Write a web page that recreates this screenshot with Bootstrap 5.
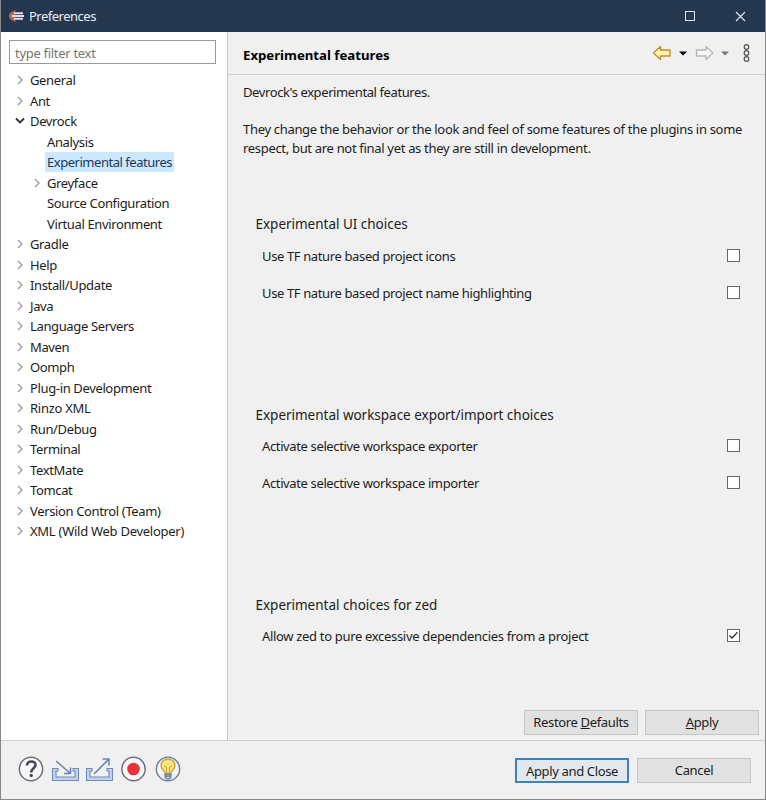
<!DOCTYPE html>
<html lang="en">
<head>
<meta charset="utf-8">
<meta name="viewport" content="width=device-width, initial-scale=1">
<title>Preferences</title>
<link href="https://cdn.jsdelivr.net/npm/bootstrap@5.3.0/dist/css/bootstrap.min.css" rel="stylesheet">
<style>
body{font-family:"Noto Sans","Open Sans",sans-serif;font-size:13px;line-height:19px;color:#1c1c1c;background:#f0f0f0;letter-spacing:-.3px}
.window{width:766px;height:800px;border:1px solid #85878a;border-top:0;background:#f0f0f0;overflow:hidden}
.titlebar{height:32px;margin:0 -1px;padding-left:9px;background:#25364f;color:#e9edf3;flex:none;letter-spacing:-.5px}
.titlebar .caption{width:46px}
.side{width:227px;background:#fff;border-right:1px solid #c9c9c9;padding:8px 0 0 8px}
.filter{width:207px;height:24px;border:1px solid #9a9a9a;border-radius:0;padding:1px 5px 0;font-size:13px;color:#666;line-height:20px;letter-spacing:-.3px}
.filter::placeholder{color:#757575}
.tree{margin-top:5.8px}
.tree li{height:20.52px;display:flex;align-items:center;padding-left:6px}
.tree li.sub{padding-left:23px}
.tree li .lbl{letter-spacing:-.36px}
.tree li .wide{letter-spacing:-.27px}
.tree svg{width:10px;height:10px;margin-right:3px;flex:none}
.tree .blank{width:13px;flex:none}
.tree .lbl{padding:0 2px;line-height:20px;white-space:nowrap}
.tree li.sub .sel{background:#cce8ff;color:#17395c;letter-spacing:-.47px}
.pagehead{height:43px;border-bottom:1px solid #cfcfcf;padding:2px 15px 0 15px}
.pagehead h1{font-size:13.2px;font-weight:700;color:#000;margin:3px 0 0;letter-spacing:0}
.content{padding:8px 15px 0;white-space:nowrap}
.content>p:first-child{letter-spacing:-.4px}
.intro{margin-top:18px;letter-spacing:-.315px}
.groups{margin-top:56px}
.group{height:190.5px;padding:0 10.5px 0 12.5px}
.group h2{font-size:13.5px;font-weight:400;line-height:20px;margin:0 0 12.5px;letter-spacing:-.02px}
.opt{height:37px;padding-left:6.5px;align-items:flex-start;letter-spacing:-.37px}
.cb{appearance:none;width:13px;height:13px;border:1px solid #666;background:#fff;margin:2px 0 0;display:block}
.zed .opt{letter-spacing:-.32px;margin-top:-1px}
.cb:checked{background:#fff url("data:image/svg+xml,%3Csvg xmlns='http://www.w3.org/2000/svg' viewBox='0 0 11 11'%3E%3Cpath d='M1.5 5.5L4 8L9.5 2.2' fill='none' stroke='%23333' stroke-width='1.3'/%3E%3C/svg%3E")}
.pagebtns{gap:7px;padding:0 6px 5px 0}
.winbtn{width:114px;height:25px;border-radius:0;border:1px solid #c6c6c6;background:#e1e1e1;color:#1c1c1c;font-size:13px;line-height:21px;padding:1px 0;white-space:nowrap;letter-spacing:-.35px}
.winbtn.primary{border:2px solid #3d82b8;line-height:20px;padding:0;background:#e3e8ee}
.footer{height:59px;border-top:1px solid #cfcfcf;padding:0 14px 0 17px;flex:none}
.footer .winbtn{margin-top:1px}
</style>
<script src="https://cdn.jsdelivr.net/npm/bootstrap@5.3.0/dist/js/bootstrap.bundle.min.js"></script>
</head>
<body>
<svg class="d-none">
<symbol id="chev" viewBox="0 0 10 10"><path d="M3 1l4 4-4 4" fill="none" stroke="#999" stroke-width="1.3"/></symbol>
<symbol id="open" viewBox="0 0 10 10"><path d="M1 2.500l4 4 4-4" fill="none" stroke="#333" stroke-width="1.8"/></symbol>
</svg>
<div class="window d-flex flex-column">
<header class="titlebar d-flex align-items-center">
<svg width="16" height="14" viewBox="0 0 16 14"><path d="M7 1C3 2 0 4 0 7s3 5 7 6C5 10 5 4 7 1z" fill="#b06a4c"/><path d="M5 4.200h9M3 7h12M5 9.800h9" stroke="#e0dcec" stroke-width="2"/></svg>
<span class="ms-1">Preferences</span>
<div class="ms-auto d-flex me-1">
<span class="caption"></span>
<svg width="51" height="32"><rect x="20.500" y="11.500" width="9" height="9" fill="none" stroke="#dfe5ed"/></svg>
<svg width="46" height="32"><path d="M20 12l9 9M29 12l-9 9" stroke="#dfe5ed" stroke-width="1.200"/></svg>
</div>
</header>
<main class="d-flex flex-grow-1">
<aside class="side flex-shrink-0">
<input class="filter d-block" placeholder="type filter text" aria-label="Filter">
<ul class="tree list-unstyled mb-0">
<li><svg><use href="#chev"/></svg><span class="lbl">General</span></li>
<li><svg><use href="#chev"/></svg><span class="lbl">Ant</span></li>
<li><svg><use href="#open"/></svg><span class="lbl">Devrock</span></li>
<li class="sub"><i class="blank"></i><span class="lbl">Analysis</span></li>
<li class="sub"><i class="blank"></i><span class="lbl sel">Experimental features</span></li>
<li class="sub"><svg><use href="#chev"/></svg><span class="lbl">Greyface</span></li>
<li class="sub"><i class="blank"></i><span class="lbl">Source Configuration</span></li>
<li class="sub"><i class="blank"></i><span class="lbl">Virtual Environment</span></li>
<li><svg><use href="#chev"/></svg><span class="lbl">Gradle</span></li>
<li><svg><use href="#chev"/></svg><span class="lbl">Help</span></li>
<li><svg><use href="#chev"/></svg><span class="lbl">Install/Update</span></li>
<li><svg><use href="#chev"/></svg><span class="lbl">Java</span></li>
<li><svg><use href="#chev"/></svg><span class="lbl">Language Servers</span></li>
<li><svg><use href="#chev"/></svg><span class="lbl">Maven</span></li>
<li><svg><use href="#chev"/></svg><span class="lbl">Oomph</span></li>
<li><svg><use href="#chev"/></svg><span class="lbl">Plug-in Development</span></li>
<li><svg><use href="#chev"/></svg><span class="lbl wide">Rinzo XML</span></li>
<li><svg><use href="#chev"/></svg><span class="lbl">Run/Debug</span></li>
<li><svg><use href="#chev"/></svg><span class="lbl">Terminal</span></li>
<li><svg><use href="#chev"/></svg><span class="lbl">TextMate</span></li>
<li><svg><use href="#chev"/></svg><span class="lbl">Tomcat</span></li>
<li><svg><use href="#chev"/></svg><span class="lbl">Version Control (Team)</span></li>
<li><svg><use href="#chev"/></svg><span class="lbl wide">XML (Wild Web Developer)</span></li>
</ul>
</aside>
<section class="flex-grow-1 d-flex flex-column">
<div class="pagehead d-flex align-items-center">
<h1>Experimental features</h1>
<svg class="ms-auto" width="100" height="24" viewBox="0 0 100 24">
<path d="M3.500 11l7-6.500v3.500h9.500v6h-9.500v3.500z" fill="#fff3b0" stroke="#c28d2c" stroke-width="1.400" stroke-linejoin="round"/>
<path d="M29 9.500h8l-4 4z" fill="#000"/>
<path d="M63 11l-7-6.500v3.500h-9.500v6h9.500v3.500z" fill="#f6f6f6" stroke="#b5b5b5" stroke-width="1.300" stroke-linejoin="round"/>
<path d="M71 9.500h8l-4 4z" fill="#777"/>
<g fill="none" stroke="#555" stroke-width="1.200"><circle cx="96.500" cy="5" r="2.300"/><circle cx="96.500" cy="11" r="2.300"/><circle cx="96.500" cy="17" r="2.300"/></g>
</svg>
</div>
<div class="content flex-grow-1">
<p class="mb-0">Devrock's experimental features.</p>
<p class="mb-0 intro">They change the behavior or the look and feel of some features of the plugins in some<br>respect, but are not final yet as they are still in development.</p>
<div class="groups">
<div class="group"><h2>Experimental UI choices</h2>
<label class="opt d-flex justify-content-between">Use TF nature based project icons<input type="checkbox" class="cb"></label>
<label class="opt d-flex justify-content-between">Use TF nature based project name highlighting<input type="checkbox" class="cb"></label></div>
<div class="group"><h2>Experimental workspace export/import choices</h2>
<label class="opt d-flex justify-content-between">Activate selective workspace exporter<input type="checkbox" class="cb"></label>
<label class="opt d-flex justify-content-between">Activate selective workspace importer<input type="checkbox" class="cb"></label></div>
<div class="group zed h-auto"><h2>Experimental choices for zed</h2>
<label class="opt d-flex justify-content-between">Allow zed to pure excessive dependencies from a project<input type="checkbox" class="cb" checked></label></div>
</div>
</div>
<div class="d-flex justify-content-end pagebtns">
<button class="winbtn">Restore <u>D</u>efaults</button>
<button class="winbtn"><u>A</u>pply</button>
</div>
</section>
</main>
<footer class="footer d-flex align-items-center">
<svg width="170" height="32" viewBox="0 0 170 32">
<g fill="#f8f8fb" stroke="#6b7080" stroke-width="1.500"><circle cx="13" cy="15" r="11.700"/><circle cx="115.500" cy="15" r="11.700"/><circle cx="150" cy="15" r="11.700" fill="#eff6fb" stroke="#71839a"/></g>
<path d="M9 11.500c0-5.300 8.500-5.300 8.500-.5 0 3.500-4.300 3.200-4.300 7.500" fill="none" stroke="#484b55" stroke-width="2.600"/><circle cx="13.200" cy="21.500" r="1.700" fill="#484b55"/>
<g fill="#c4d2ea" stroke="#6f8bb8" stroke-width="1.100"><path d="M34.500 14.500h5.500v2.500h-2v6h19v-6h-2v-2.500h5.500v12h-26z"/><path d="M68.500 14.500h5.500v2.500h-2v6h19v-6h-2v-2.500h5.500v12h-26z"/></g>
<g fill="none" stroke="#6484b0" stroke-width="1.500"><path d="M38 7l14 12M52.500 13.500v6h-6.500"/><path d="M76 20L91 5M84.500 5H91v6.500"/></g>
<circle cx="115.500" cy="15" r="6.300" fill="#e8323a"/>
<path d="M147 19.500c0-3-4-4-4-8 0-8.500 14-8.500 14 0 0 4-4 5-4 8z" fill="#ffe27a" stroke="#c79d3c" stroke-width="1.300"/><path d="M148.500 18v-4l-2-2.500M151.500 18v-4l2-2.500" fill="none" stroke="#c79d3c"/><path d="M147 20h6v3.500l-1.500 1.500h-3l-1.500-1.500zM147 22h6" fill="#bac7d5" stroke="#536983"/>
</svg>
<div class="ms-auto d-flex gap-2"><button class="winbtn primary">Apply and Close</button><button class="winbtn">Cancel</button></div>
</footer>
</div>
</body>
</html>
